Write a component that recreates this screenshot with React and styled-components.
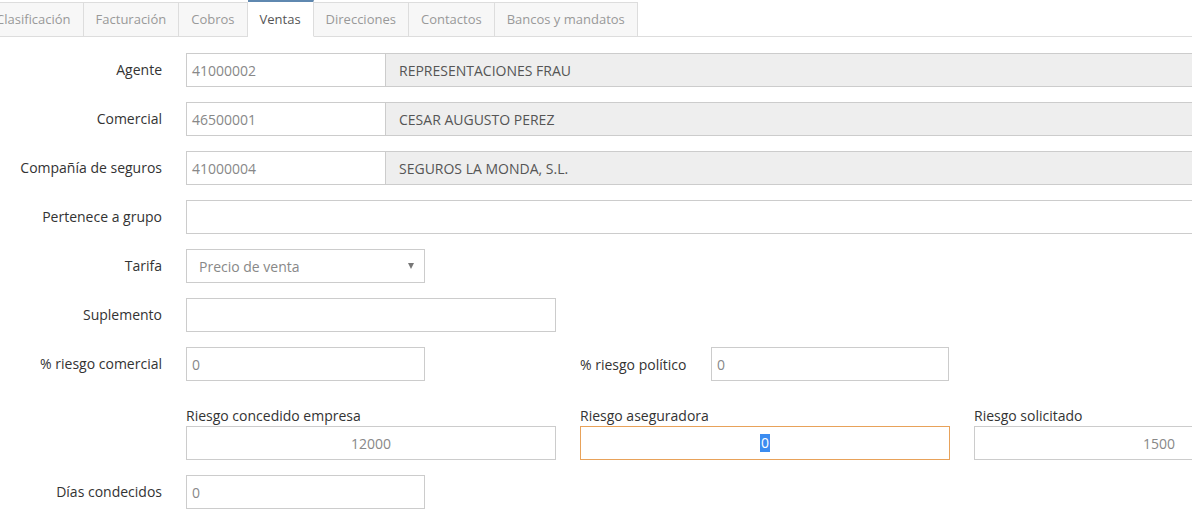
import React from "react";
import styled, { createGlobalStyle } from "styled-components";

const GlobalStyle = createGlobalStyle`
  html, body {
    margin: 0;
    padding: 0;
    background: #fff;
    overflow: hidden;
  }
  body {
    font-family: "Open Sans", "Noto Sans", Arial, sans-serif;
    font-size: 14px;
    color: #333;
  }
  * { box-sizing: border-box; }
`;

const Page = styled.div`
  width: 1400px;
`;

const Tabs = styled.ul`
  display: flex;
  list-style: none;
  margin: 0 0 0 -17px;
  padding: 1px 0 0;
  border-bottom: 1px solid #ddd;
`;

const Tab = styled.li`
  display: flex;
  align-items: center;
  padding: 0 12px 1px;
  margin-bottom: -1px;
  font-size: 13px;
  color: ${(p) => (p.active ? "#555" : "#999")};
  background: ${(p) => (p.active ? "#fff" : "#f7f7f7")};
  border: 1px solid #ddd;
  border-left: ${(p) => (p.first ? "1px solid #ddd" : "none")};
  border-top: ${(p) => (p.active ? "2px solid #5f88b0" : "1px solid #ddd")};
  border-bottom: ${(p) => (p.active ? "1px solid #fff" : "1px solid #ddd")};
  margin-top: ${(p) => (p.active ? "-1px" : "1px")};
  height: ${(p) => (p.active ? "37px" : "35px")};
`;

const Form = styled.div`
  padding-top: 16px;
  display: flex;
  flex-direction: column;
  gap: 15px;
`;

const Row = styled.div`
  display: flex;
  align-items: center;
  gap: 24px;
  margin-top: ${(p) => p.mt || 0}px;
`;

const Label = styled.label`
  width: 162px;
  flex-shrink: 0;
  text-align: right;
  font-size: 14px;
  color: #333;
  line-height: 34px;
  white-space: nowrap;
`;

const Fields = styled.div`
  display: flex;
  align-items: ${(p) => (p.bottom ? "flex-end" : "center")};
  gap: ${(p) => p.gap ?? 24}px;
  flex: 1;
`;

const Input = styled.div`
  height: 34px;
  width: ${(p) => (p.w ? `${p.w}px` : "auto")};
  flex: ${(p) => (p.w ? "none" : "1")};
  flex-shrink: 0;
  display: flex;
  align-items: center;
  justify-content: ${(p) => (p.center ? "center" : "flex-start")};
  padding: 0 ${(p) => (p.pad ?? 5)}px;
  border: 1px solid ${(p) => (p.focus ? "#e8a25a" : "#ccc")};
  border-left: ${(p) => (p.joined ? "none" : undefined)};
  background: ${(p) => (p.readonly ? "#eee" : "#fff")};
  color: ${(p) => (p.readonly ? "#555" : "#888")};
  font-size: 14px;
  white-space: nowrap;
`;

const GroupInput = styled(Input)`
  flex: none;
  width: 100%;
`;

const Selected = styled.span`
  background: #3b8cf0;
  color: #fff;
  padding: 0 1px;
  line-height: 18px;
`;

const Select = styled(Input)`
  justify-content: space-between;
  padding: 0 10px 0 12px;
`;

const Caret = styled.span`
  width: 0;
  height: 0;
  border-left: 3px solid transparent;
  border-right: 3px solid transparent;
  border-top: 6px solid #777;
`;

const Group = styled.div`
  display: flex;
  flex-direction: column;
  width: 370px;
  flex-shrink: 0;
`;

const TopLabel = styled.span`
  font-size: 14px;
  color: #333;
  line-height: 20px;
`;

const Inline = styled.div`
  display: flex;
  align-items: center;
  gap: 24px;
  margin-left: 155px;
`;

const InlineLabel = styled.span`
  font-size: 14px;
  color: #333;
  width: 107px;
  white-space: nowrap;
`;

const tabs = [
  "Clasificación",
  "Facturación",
  "Cobros",
  "Ventas",
  "Direcciones",
  "Contactos",
  "Bancos y mandatos",
];

export default function App() {
  return (
    <Page>
      <GlobalStyle />
      <Tabs>
        {tabs.map((t, i) => (
          <Tab key={t} first={i === 0} active={t === "Ventas"}>
            {t}
          </Tab>
        ))}
      </Tabs>
      <Form>
        <Row>
          <Label>Agente</Label>
          <Fields gap={0}>
            <Input w={200}>41000002</Input>
            <Input readonly joined pad={13}>REPRESENTACIONES FRAU</Input>
          </Fields>
        </Row>
        <Row>
          <Label>Comercial</Label>
          <Fields gap={0}>
            <Input w={200}>46500001</Input>
            <Input readonly joined pad={13}>CESAR AUGUSTO PEREZ</Input>
          </Fields>
        </Row>
        <Row>
          <Label>Compañía de seguros</Label>
          <Fields gap={0}>
            <Input w={200}>41000004</Input>
            <Input readonly joined pad={13}>SEGUROS LA MONDA, S.L.</Input>
          </Fields>
        </Row>
        <Row>
          <Label>Pertenece a grupo</Label>
          <Fields>
            <Input />
          </Fields>
        </Row>
        <Row>
          <Label>Tarifa</Label>
          <Fields>
            <Select w={239}>
              Precio de venta
              <Caret />
            </Select>
          </Fields>
        </Row>
        <Row>
          <Label>Suplemento</Label>
          <Fields>
            <Input w={370} />
          </Fields>
        </Row>
        <Row>
          <Label>% riesgo comercial</Label>
          <Fields gap={0}>
            <Input w={239}>0</Input>
            <Inline>
              <InlineLabel>% riesgo político</InlineLabel>
              <Input w={238}>0</Input>
            </Inline>
          </Fields>
        </Row>
        <Row mt={10}>
          <Label />
          <Fields bottom>
            <Group>
              <TopLabel>Riesgo concedido empresa</TopLabel>
              <GroupInput center>12000</GroupInput>
            </Group>
            <Group>
              <TopLabel>Riesgo aseguradora</TopLabel>
              <GroupInput center focus>
                <Selected>0</Selected>
              </GroupInput>
            </Group>
            <Group>
              <TopLabel>Riesgo solicitado</TopLabel>
              <GroupInput center>1500</GroupInput>
            </Group>
          </Fields>
        </Row>
        <Row>
          <Label>Días condecidos</Label>
          <Fields>
            <Input w={239}>0</Input>
          </Fields>
        </Row>
      </Form>
    </Page>
  );
}
